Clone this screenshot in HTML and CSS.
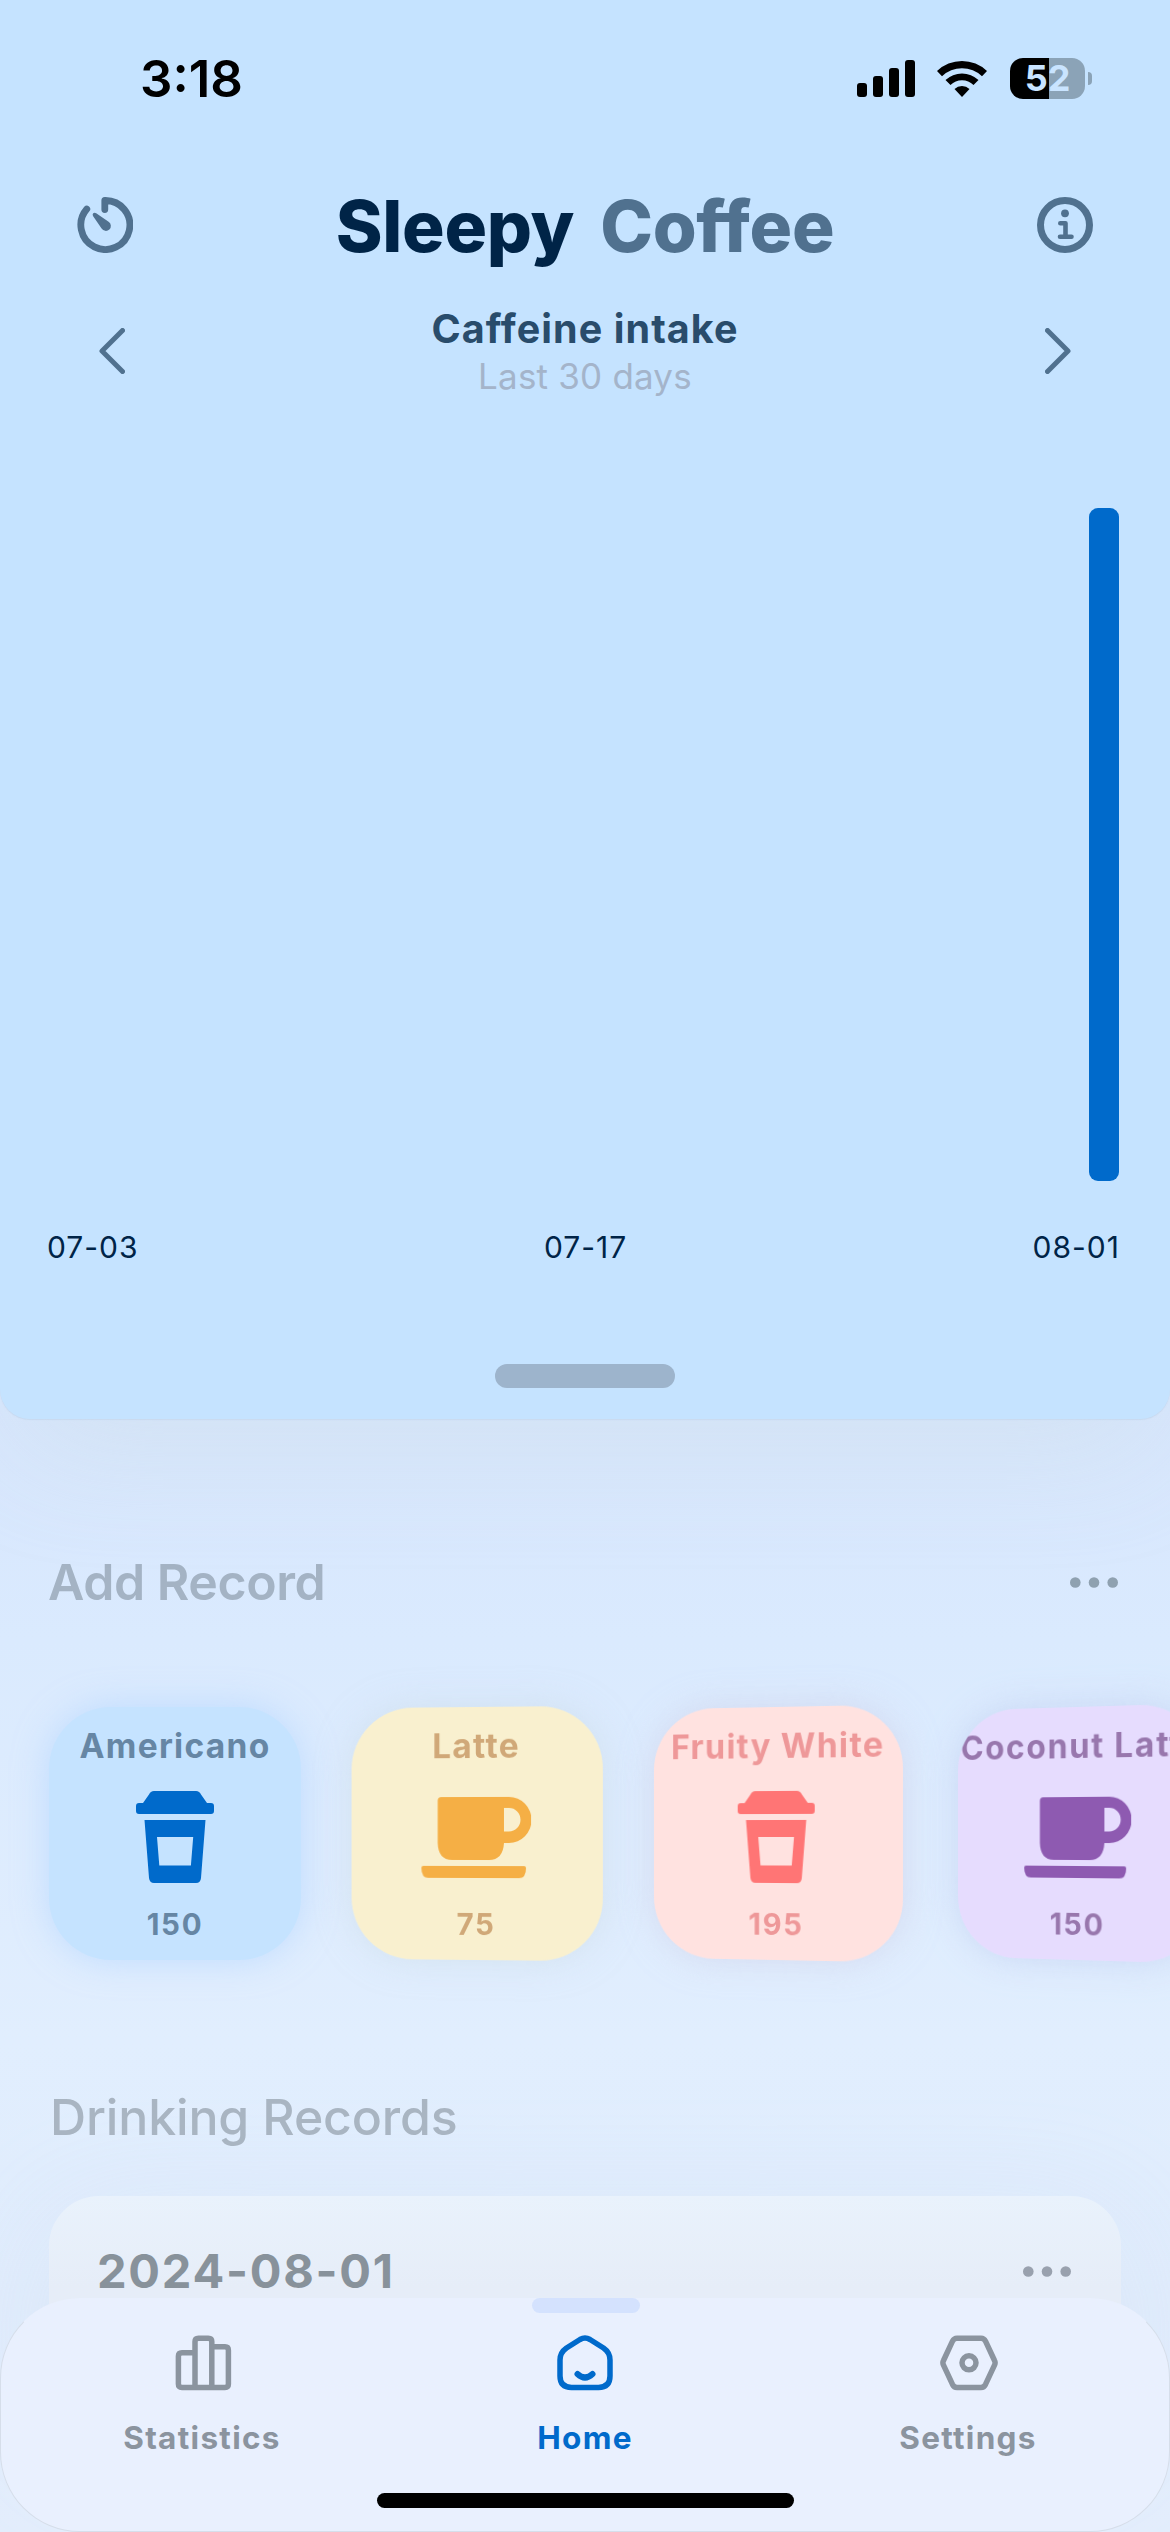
FILE: index.html
```html
<!DOCTYPE html>
<html lang="en">
<head>
<meta charset="utf-8">
<title>Sleepy Coffee</title>
<link rel="stylesheet" href="styles.css">
</head>
<body>
<svg width="0" height="0" class="defs" aria-hidden="true">
  <symbol id="togo" viewBox="0 0 78 92">
    <path d="M13 3.500Q14.500 0 18 0H60Q63.500 0 65 3.500L71 12H75Q78 12 78 15V20Q78 23 75 23H3Q0 23 0 20V15Q0 12 3 12H7Z"/>
    <path fill-rule="evenodd" d="M8.500 29H69.500L65 87Q64.600 92 60 92H18Q13.600 92 13 87ZM21 46L23.300 74.500H54.900L57.200 46Z"/>
  </symbol>
  <symbol id="mug" viewBox="0 0 110 81">
    <path fill-rule="evenodd" d="M20 0H88A22.500 23 0 0 1 88 46H83Q82 63 68 63H31Q17 63 16.500 46V3.500Q16.500 0 20 0ZM83 11V34.500H88A11.500 11.750 0 0 0 88 11Z"/>
    <path d="M2 69H103Q105 69 105 71Q105 81 98 81H7Q0 81 0 71Q0 69 2 69Z"/>
  </symbol>
</svg>
<main class="phone">
  <section class="hero">
    <div class="status">
      <span class="time">3:18</span>
      <div class="indicators">
        <svg class="signal" viewBox="0 0 58 37"><rect y="23" width="10" height="14" rx="3"/><rect x="16" y="16" width="10" height="21" rx="3"/><rect x="32" y="8" width="10" height="29" rx="3"/><rect x="48" width="10" height="37" rx="3"/></svg>
        <svg class="wifi" viewBox="0 0 50 37"><path d="M0 11A36 36 0 0 1 50 11L45 16.300A29 29 0 0 0 5 16.300Z"/><path d="M8.500 20A24 24 0 0 1 41.500 20L36.500 25A16.500 16.500 0 0 0 13.500 25Z"/><path d="M17.500 29A11 11 0 0 1 32.500 29L25 37Z"/></svg>
        <div class="battery"><span>52</span></div>
        <div class="nub"></div>
      </div>
    </div>
    <header class="head">
      <svg class="head-icon" viewBox="0 0 56 56"><path d="M9.800 12A24.500 24.500 0 1 0 27.800 3.500V12.500" fill="none" stroke="currentColor" stroke-width="6.800" stroke-linecap="round" stroke-linejoin="round"/><path d="M16.200 16.300Q17.600 15.200 19.200 16.300L31.600 24.700A5 5 0 1 1 24.600 31.500L16 19Q15.200 17.400 16.200 16.300Z" fill="currentColor"/></svg>
      <h1><span class="sleepy">Sleepy</span><span class="coffee">Coffee</span></h1>
      <svg class="head-icon" viewBox="0 0 56 56"><circle cx="28" cy="28" r="24.500" fill="none" stroke="currentColor" stroke-width="7"/><circle cx="28" cy="16.300" r="3.900" fill="currentColor"/><path d="M23.300 26.200H28.500V39.500M23 39.800H34.500" fill="none" stroke="currentColor" stroke-width="4.600" stroke-linecap="round" stroke-linejoin="round"/></svg>
    </header>
    <div class="period">
      <svg class="chev" viewBox="0 0 26 46"><path d="M23.500 2.500L3 23L23.500 43.500"/></svg>
      <div class="period-text"><strong>Caffeine intake</strong><span>Last 30 days</span></div>
      <svg class="chev" viewBox="0 0 26 46"><path d="M2.500 2.500L23 23L2.500 43.500"/></svg>
    </div>
    <div class="chart"><div class="bar"></div></div>
    <div class="axis"><span>07-03</span><span>07-17</span><span>08-01</span></div>
    <div class="grabber"></div>
  </section>

  <section class="add">
    <div class="section-head"><h2>Add Record</h2><svg class="dots" viewBox="0 0 48 11"><circle cx="5.300" cy="5.500" r="5.300"/><circle cx="24" cy="5.500" r="5.300"/><circle cx="42.700" cy="5.500" r="5.300"/></svg></div>
    <div class="drinks">
      <article class="drink americano"><h3>Americano</h3><svg class="togo"><use href="#togo"/></svg><b>150</b></article>
      <article class="drink latte"><h3>Latte</h3><svg class="mug"><use href="#mug"/></svg><b>75</b></article>
      <article class="drink fruity"><h3>Fruity White</h3><svg class="togo"><use href="#togo"/></svg><b>195</b></article>
      <article class="drink coconut"><h3>Coconut Latte</h3><svg class="mug"><use href="#mug"/></svg><b>150</b></article>
    </div>
  </section>

  <section class="records">
    <h2>Drinking Records</h2>
    <div class="day"><h3>2024-08-01</h3><svg class="dots" viewBox="0 0 48 11"><circle cx="5.300" cy="5.500" r="5.300"/><circle cx="24" cy="5.500" r="5.300"/><circle cx="42.700" cy="5.500" r="5.300"/></svg></div>
  </section>

  <nav class="tabs">
    <a class="tab"><svg viewBox="0 0 60 60"><path d="M23 18.700H10Q6.400 18.700 6.400 22.200V50Q6.400 53.400 10 53.400H53Q56.400 53.400 56.400 50V16.200Q56.400 12.700 53 12.700H40M23 53V7.500Q23 4.200 26.500 4.200H36.300Q39.800 4.200 39.800 7.500V53"/></svg><span>Statistics</span></a>
    <a class="tab active"><svg viewBox="0 0 60 60"><path d="M25 5.500Q30 2.600 35 5.500L48.500 14Q55 18.500 55 26V42Q55 53.400 43.500 53.400H16.500Q5 53.400 5 42V26Q5 18.500 11.500 14Z"/><path class="smile" d="M22.500 40Q30 47 37.500 40"/></svg><span>Home</span></a>
    <a class="tab"><svg viewBox="0 0 60 60"><path d="M19 4.200H43Q46 4.200 47.500 7.200L56.500 26.500Q57.700 28.800 56.500 31.200L47.500 50.400Q46 53.400 43 53.400H19Q16 53.400 14.500 50.400L5.500 31.200Q4.300 28.800 5.500 26.500L14.500 7.200Q16 4.200 19 4.200Z"/><circle cx="31" cy="28.800" r="7"/></svg><span>Settings</span></a>
    <div class="marker"></div>
    <div class="home-indicator"></div>
  </nav>
</main>
</body>
</html>
```

FILE: styles.css
```css
* { box-sizing: border-box; margin: 0; padding: 0; }
body { font-family: Inter, "Liberation Sans", sans-serif; background: #e1edfe; }
svg { display: block; }
.defs { position: absolute; }
.phone { position: relative; width: 1170px; height: 2532px; overflow: hidden; display: flex; flex-direction: column; background: linear-gradient(#d7e6fd 1400px, #daeafe 1640px, #e1eefe 2040px, #e0ecfc 2300px, #e3edfc); }

.hero { position: relative; z-index: 1; flex: none; height: 1419px; display: flex; flex-direction: column; background: #c5e3ff; border-radius: 0 0 30px 30px; box-shadow: 0 50px 120px -20px rgba(205, 222, 230, .42), 0 1px 1px rgba(150, 180, 210, .25); }
.status { display: flex; justify-content: space-between; align-items: center; height: 156px; padding: 0 78px 0 140px; }
.time { font-size: 51px; font-weight: 600; color: #000; }
.indicators { display: flex; align-items: center; }
.signal { width: 58px; height: 37px; margin-right: 22px; }
.wifi { width: 50px; height: 37px; margin-right: 23px; }
.battery { width: 75px; height: 41px; border-radius: 13px; background: linear-gradient(90deg, #000 39px, #8ba3b7 39px); display: flex; align-items: center; justify-content: center; color: #c9e4ff; font-size: 36px; font-weight: 700; }
.nub { width: 4px; height: 13px; margin-left: 3px; border-radius: 0 5px 5px 0; background: #8ba3b7; }

.head { display: flex; justify-content: space-between; align-items: center; height: 138px; padding: 0 77px; color: #50718f; }
.head-icon { width: 56px; height: 56px; }
h1 { display: flex; gap: 26px; padding-top: 1px; font-size: 71px; font-weight: 800; letter-spacing: -.3px; }
.sleepy { color: #002447; }
.coffee { color: #50718f; }
.period { display: flex; justify-content: space-between; align-items: center; height: 114px; padding: 0 99px; }
.chev { width: 26px; height: 46px; fill: none; stroke: #50718f; stroke-width: 5; stroke-linecap: round; stroke-linejoin: round; }
.period-text { display: flex; flex-direction: column; align-items: center; padding-top: 3px; line-height: 47px; }
.period-text strong { font-size: 39.500px; font-weight: 700; letter-spacing: 1.050px; color: #294c6b; }
.period-text span { font-size: 35px; letter-spacing: .2px; color: #a4b4ca; }
.chart { display: flex; justify-content: flex-end; align-items: flex-end; height: 773px; padding-right: 51px; }
.bar { width: 30px; height: 673px; border-radius: 9px; background: #006acb; }
.axis { display: flex; justify-content: space-between; height: 92px; padding: 47px 50px 0 47px; font-size: 30px; line-height: 38px; letter-spacing: 1px; color: #002447; }
.grabber { width: 180px; height: 24px; margin: 91px auto 0; border-radius: 12px; background: #9db4cc; }

.section-head { display: flex; justify-content: space-between; align-items: center; height: 60px; padding: 0 52px 0 48px; }
h2 { font-size: 50px; font-weight: 600; line-height: 60px; letter-spacing: -.45px; color: #a4b3c4; }
.dots { width: 48px; height: 11px; fill: #8fa1b0; }
.add { flex: none; padding-top: 133px; }
.drinks { display: flex; gap: 48.500px; margin-top: 95px; padding-left: 49px; }
.drink { flex: none; width: 252px; height: 253px; border-radius: 62px; display: flex; flex-direction: column; align-items: center; overflow: hidden; }
.drink h3 { height: 42px; margin-top: 18px; font-size: 33.5px; font-weight: 700; line-height: 42px; letter-spacing: 1.300px; white-space: nowrap; }
.drink svg { height: 92px; margin-top: 24px; fill: currentColor; }
.drink .togo { width: 78px; }
.drink .mug { width: 110px; height: 81px; margin: 30px 0 5px; }
.drink b { margin-top: 22px; font-size: 29.5px; font-weight: 700; line-height: 38px; letter-spacing: 1.700px; }
.drink h3, .drink b { color: var(--text); }
.americano { --text: #6686a4; color: #006acb; background: #c5e3ff; box-shadow: 0 0 34px rgba(170, 208, 255, .6); }
.latte { --text: #d0a878; color: #f5af45; background: #f9f0cf; box-shadow: 0 0 34px rgba(200, 215, 225, .5); transform: perspective(1000px) rotateY(-4.400deg); }
.fruity { --text: #ee9899; color: #ff7575; background: #ffe2e0; box-shadow: 0 0 34px rgba(205, 205, 230, .6); transform: perspective(1000px) rotateY(-9deg); }
.coconut { --text: #9877ad; color: #8e5ab1; background: #e6dcfe; box-shadow: 0 0 34px rgba(190, 205, 240, .65); transform: perspective(1000px) rotateY(-13.500deg); }
.coconut h3 { padding-left: 5px; letter-spacing: 1.700px; }

.records { flex: none; padding: 127px 49px 0; }
.records h2 { font-weight: 500; letter-spacing: -.15px; padding-left: 1px; color: #a9b5c2; }
.day { display: flex; justify-content: space-between; height: 240px; margin-top: 49px; padding: 46px 50px 0 48px; border-radius: 50px; background: linear-gradient(#e9f2fc, #e6edf8 90px); box-shadow: 0 20px 120px rgba(200, 215, 235, .2); }
.day h3 { font-size: 47px; font-weight: 700; line-height: 58px; letter-spacing: 1.750px; color: #88929b; }
.day .dots { margin-top: 24px; fill: #99a1ae; }

.tabs { position: absolute; z-index: 2; left: 0; bottom: 0; width: 1170px; height: 234px; display: flex; justify-content: space-between; padding: 35px 16px 0; border: 1px solid #d6deea; border-top-color: transparent; border-radius: 80px; background: #e9f0fe; }
.tab { width: 370px; display: flex; flex-direction: column; align-items: center; color: #8b949f; }
.tab svg { width: 60px; height: 60px; fill: none; stroke: currentColor; stroke-width: 5.500; stroke-linecap: round; stroke-linejoin: round; }
.tab .smile { stroke-width: 6; }
.tab span { margin-top: 23px; font-size: 31.500px; font-weight: 700; line-height: 42px; letter-spacing: 1.300px; }
.active { color: #006acb; }
.marker { position: absolute; left: 531px; top: -1px; width: 108px; height: 15px; border-radius: 8px; background: #d4e2fe; }
.home-indicator { position: absolute; left: 376px; bottom: 23px; width: 417px; height: 15px; border-radius: 8px; background: #000; }
```
